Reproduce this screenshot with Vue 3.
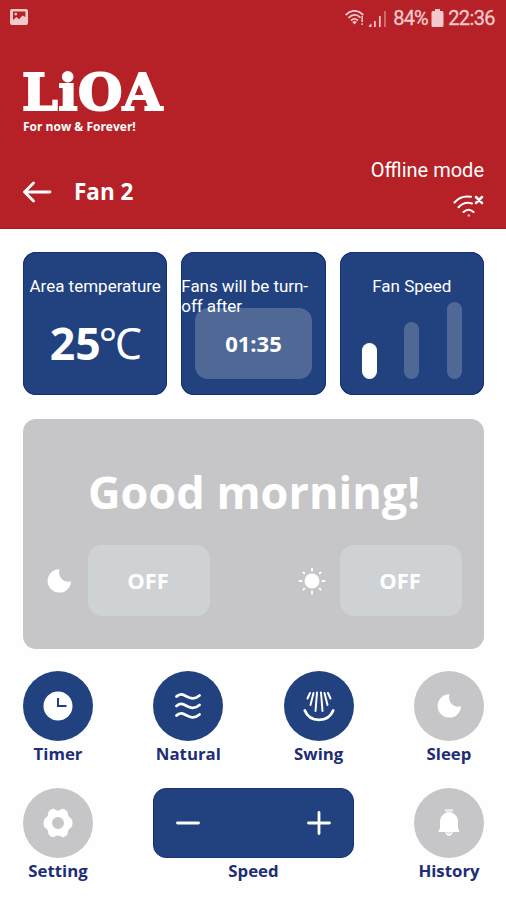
<script setup>
const speeds = [
  { height: 36, on: true },
  { height: 57, on: false },
  { height: 77, on: false }
]
const modes = [
  { id: 'timer', label: 'Timer', on: true },
  { id: 'natural', label: 'Natural', on: true },
  { id: 'swing', label: 'Swing', on: true },
  { id: 'sleep', label: 'Sleep', on: false }
]
</script>

<template>
  <main class="screen">
    <header class="header">
      <div class="status">
        <svg class="picture" width="18" height="16" viewBox="0 0 18 16">
          <path fill-rule="evenodd" d="M2 0H16Q18 0 18 2V14Q18 16 16 16H2Q0 16 0 14V2Q0 0 2 0ZM3 2.500V11L6.500 8L9 10.200L12.500 6.500L15.400 8V2.500ZM5.700 3.700a1.400 1.400 0 1 0 .1 0Z" />
        </svg>
        <div class="status-right">
          <svg class="wifi" width="20" height="16" viewBox="0 0 20 16">
            <g fill="none" stroke="currentColor" stroke-width="1.8">
              <path d="M.7 5Q9.500-3.300 18.300 5" />
              <path d="M3.400 7.800Q9.500 2 15.500 7.600" />
              <path d="M6 10.500Q9.500 7.300 13 10.500" />
            </g>
            <path d="M7.300 12 9.500 14.500 11.800 12Q9.500 10 7.300 12ZM16.400 6H17.900V12H16.400ZM16.400 13.200H17.900V15H16.400Z" />
          </svg>
          <svg class="signal" width="18" height="17" viewBox="0 0 18 17">
            <path d="M0 17V15.500L2.500 13.500V17ZM5 11H6.700V17H5ZM10 6H11.700V17H10Z" />
            <path opacity=".42" d="M15 1H17V17H15Z" />
          </svg>
          <span class="percent">84%</span>
          <svg class="battery" width="13" height="18" viewBox="0 0 13 18">
            <path d="M4 0H9V2H11Q12.500 2 12.500 3.500V16.500Q12.500 18 11 18H2Q.5 18 .5 16.500V3.500Q.5 2 2 2H4Z" />
          </svg>
          <span class="clock">22:36</span>
        </div>
      </div>
      <div class="brand">
        <div class="logo">LiOA</div>
        <div class="slogan">For now &amp; Forever!</div>
      </div>
      <div class="nav">
        <div class="title">
          <svg class="outline" width="30" height="22" viewBox="0 0 30 22" stroke-width="2.800">
            <path d="M11.500 2 2.500 11 11.500 20M2.500 11H28" />
          </svg>
          <h1>Fan 2</h1>
        </div>
        <div class="connection">
          <span>Offline mode</span>
          <svg class="outline" width="32" height="24" viewBox="0 0 32 24" stroke-width="2">
            <path d="M2.500 8.500Q9 .8 19 2.800M6.500 13.300Q12.500 7 20 9.500M11.500 18Q16.500 13.500 21.500 18" />
            <path stroke-width="2.500" d="M24 3 30 9M30 3 24 9" />
            <circle cx="16.800" cy="21.500" r="1.300" fill="currentColor" stroke="none" opacity=".65" />
          </svg>
        </div>
      </div>
    </header>

    <section class="cards">
      <article class="card">
        <p class="caption">Area temperature</p>
        <div class="temp"><b>25</b><span>℃</span></div>
      </article>
      <article class="card">
        <p class="caption left">Fans will be turn-<br>off after</p>
        <div class="countdown">01:35</div>
      </article>
      <article class="card">
        <p class="caption">Fan Speed</p>
        <div class="bars">
          <i v-for="(s, i) in speeds" :key="i" :class="{ on: s.on }" :style="{ height: s.height + 'px' }"></i>
        </div>
      </article>
    </section>

    <section class="panel">
      <h2>Good morning!</h2>
      <div class="schedule">
        <svg class="moon" width="26" height="28" viewBox="0 0 26 28">
          <path d="M13.500 2.200A11.700 11.700 0 1 0 25 14.300C18 16.300 11 9.500 13.500 2.200Z" />
        </svg>
        <button>OFF</button>
        <svg class="sun" width="28" height="28" viewBox="0 0 28 28">
          <circle cx="14" cy="14" r="7.500" />
          <path fill="none" stroke="currentColor" stroke-width="2" stroke-linecap="round" d="M14 1.500V3.500M14 24.500V26.500M1.500 14H3.500M24.500 14H26.500M5.500 5.500 6.200 6.200M21.800 21.800 22.500 22.500M22.500 5.500 21.800 6.200M6.200 21.800 5.500 22.500" />
        </svg>
        <button>OFF</button>
      </div>
    </section>

    <section class="controls">
      <div v-for="m in modes" :key="m.id" class="control">
        <div class="round" :class="{ on: m.on }">
          <svg v-if="m.id === 'timer'" width="34" height="34" viewBox="0 0 34 34">
            <circle cx="17" cy="17" r="14.500" />
            <path class="ink" d="M17 9V17H25.500" />
          </svg>
          <svg v-else-if="m.id === 'natural'" width="34" height="34" viewBox="0 0 34 34">
            <path class="line" d="M5.500 7.500C13 0 18 15.500 28.500 6.500M5.500 17C13 9.500 18 25 28.500 16M5.500 26.500C13 19 18 34.500 28.500 25.500" />
          </svg>
          <svg v-else-if="m.id === 'swing'" width="34" height="34" viewBox="0 0 34 34">
            <path class="line thin" d="M8 4 5.500 9.500M11.500 4 8.500 16M15 3.500 13.500 22M19 3.500 20.500 22M22.500 4 25.500 16M26 4 28.500 9.500" />
            <path class="line" d="M2.800 21.500C8 34 26 34 31.200 21.500" />
          </svg>
          <svg v-else width="26" height="28" viewBox="0 0 26 28">
            <path d="M13.500 2.200A11.700 11.700 0 1 0 25 14.300C18 16.300 11 9.500 13.500 2.200Z" />
          </svg>
        </div>
        <span>{{ m.label }}</span>
      </div>
      <div class="control">
        <div class="round">
          <svg width="34" height="34" viewBox="0 0 34 34">
            <path fill-rule="evenodd" d="M10 3.500Q13 2 14.500 4Q17 5 19.500 4Q21 2 24 3.500Q27 5 27 8.500Q27 10.500 29 11.500Q31.500 13 31.500 17Q31.500 21 29 22.500Q27 23.500 27 25.500Q27 29 24 30.500Q21 32 19.500 30Q17 29 14.500 30Q13 32 10 30.500Q7 29 7 25.500Q7 23.500 5 22.500Q2.500 21 2.500 17Q2.500 13 5 11.500Q7 10.500 7 8.500Q7 5 10 3.500ZM17 11A6 6 0 1 0 17 23A6 6 0 1 0 17 11Z" />
          </svg>
        </div>
        <span>Setting</span>
      </div>
      <div class="control wide">
        <div class="stepper">
          <svg width="26" height="26" viewBox="0 0 26 26"><path class="line" d="M2.500 13H23.500" /></svg>
          <svg width="26" height="26" viewBox="0 0 26 26"><path class="line" d="M2.500 13H23.500M13 2.500V23.500" /></svg>
        </div>
        <span>Speed</span>
      </div>
      <div class="control">
        <div class="round">
          <svg width="26" height="30" viewBox="0 0 26 30">
            <path opacity=".6" d="M9 1H17V3L15 6H11L9 3Z" />
            <path d="M13 4.500C7 4.500 4 9 4 14V20L2.300 24H9.500Q10 27.800 13 27.800T16.500 24H23.700L22 20V14C22 9 19 4.500 13 4.500Z" />
            <path d="M10.700 24.200Q13 26.800 15.300 24.200" fill="none" stroke="#c6c6c8" />
          </svg>
        </div>
        <span>History</span>
      </div>
    </section>
  </main>
</template>

<style>
body { margin: 0; background: #fefefe; }
</style>

<style scoped>
* { box-sizing: border-box; }
.screen { width: 506px; height: 900px; overflow: hidden; font-family: "Open Sans", sans-serif; color: #fff; background: #fefefe; }
svg { display: block; flex: none; fill: currentColor; }
svg.outline { fill: none; stroke: currentColor; stroke-linecap: round; stroke-linejoin: round; }
.header { height: 229px; background: #b52126; border-bottom: 1px solid #a9161d; }
.status { height: 36px; padding: 0 11px 0 10px; display: flex; align-items: center; justify-content: space-between; color: #f3c9cc; font: 20px/36px Roboto, sans-serif; }
.picture { margin-top: -2px; }
.status-right { display: flex; align-items: center; }
.signal { margin-left: 4px; }
.percent { margin-left: 6px; width: 34px; letter-spacing: -.8px; white-space: nowrap; }
.battery { margin-left: 4px; }
.clock { margin-left: 4px; letter-spacing: -.6px; }
.percent, .clock { -webkit-text-stroke: .3px currentColor; }
.brand { padding: 31px 0 0 22px; height: 102px; }
.logo { font: bold 51px/51px "DejaVu Serif", serif; letter-spacing: .4px; white-space: nowrap; -webkit-text-stroke: 2px #fff; }
.slogan { font-size: 12px; line-height: 17px; font-weight: 700; padding-left: 1px; white-space: nowrap; }
.nav { display: flex; justify-content: space-between; padding: 20px 22px 0 22px; }
.title { display: flex; align-items: center; gap: 22px; height: 68px; }
.title h1 { margin: 0; font-size: 22.500px; line-height: 30px; font-weight: 700; }
.connection { display: flex; flex-direction: column; align-items: flex-end; font: 20px/24px Roboto, sans-serif; gap: 12px; }
.cards { display: grid; grid-template-columns: repeat(3, 1fr); gap: 14px; padding: 23px 22px 0 23px; }
.card { height: 143px; border-radius: 13px; background: #21417f; box-shadow: inset 0 0 0 1px #143078; display: flex; flex-direction: column; align-items: center; padding-top: 24px; }
.caption { margin: 0; font: 17px/20px Roboto, sans-serif; white-space: nowrap; }
.caption.left { position: relative; z-index: 1; align-self: stretch; height: 32px; letter-spacing: -.06px; }
.temp { display: flex; align-items: center; height: 60px; margin-top: 17px; }
.temp b { font-size: 44.500px; line-height: 60px; }
.temp span { font: 400 43px/60px "Noto Sans", "Noto Sans CJK JP", sans-serif; height: 60px; margin: 0 1px 0 -2px; letter-spacing: -2px; }
.countdown { flex: none; width: 117px; height: 71px; border-radius: 13px; background: #506896; font-size: 22px; line-height: 70px; font-weight: 700; text-align: center; }
.bars { display: flex; align-items: flex-end; justify-content: space-between; width: 100px; height: 77px; margin-top: 6px; }
.bars i { width: 15px; border-radius: 8px; background: #506896; }
.bars i.on { background: #fff; }
.panel { margin: 24px 22px 0 23px; height: 230px; border-radius: 13px; background: #c6c6c8; padding: 42px 22px 0 23px; }
.panel h2 { margin: 0; height: 84px; font-size: 45px; line-height: 62px; text-align: center; white-space: nowrap; }
.schedule { display: flex; align-items: center; }
.schedule button { flex: none; width: 122px; height: 71px; padding: 0 2px 2px 0; border: 0; border-radius: 14px; background: #cfd2d4; color: inherit; font: bold 22px "Open Sans", sans-serif; }
.moon + button { margin-left: 16px; }
.sun { margin: 0 14px 0 auto; }
.controls { display: grid; grid-template-columns: repeat(4, 70px); justify-content: space-between; row-gap: 22.500px; padding: 22.400px 22px 0 23px; }
.control { height: 94px; display: flex; flex-direction: column; align-items: center; color: #21417f; }
.control span { font-size: 16.800px; line-height: 25px; font-weight: 700; white-space: nowrap; color: #1d2d76; }
.round { flex: none; width: 70px; height: 70px; border-radius: 50%; background: #c6c6c8; color: #fff; display: flex; align-items: center; justify-content: center; }
.round.on, .stepper { background: #21417f; }
.wide { grid-column: 2 / 4; }
.stepper { flex: none; width: 100%; height: 70px; border: 1px solid #143078; border-radius: 13px; color: #fff; display: flex; align-items: center; justify-content: space-between; padding: 0 21px; }
.ink { fill: none; stroke: #21417f; stroke-width: 2; }
.line { fill: none; stroke: currentColor; stroke-width: 2.800; stroke-linecap: round; }
.thin { stroke-width: 2; }
</style>
